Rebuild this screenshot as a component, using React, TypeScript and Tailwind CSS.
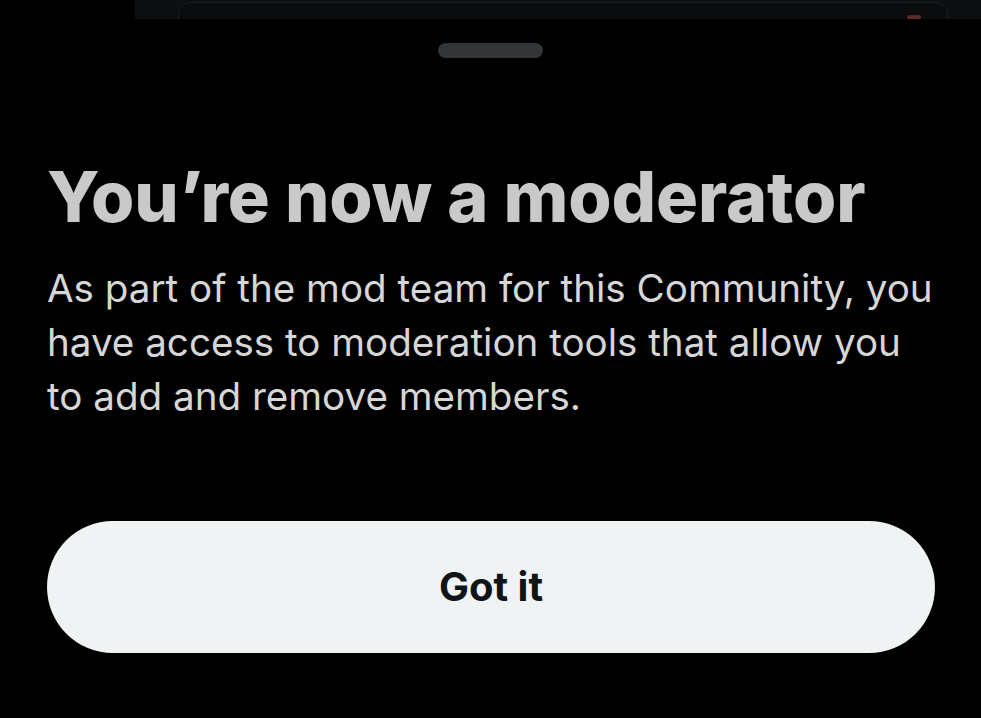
export default function App() {
  return (
    <div className="flex flex-col w-[981px] h-[718px] overflow-hidden bg-black" style={{ fontFamily: "Inter, 'Noto Sans', sans-serif" }}>
      {/* page behind the sheet */}
      <div className="relative shrink-0 ml-[135px] h-[40px] bg-[#0d0e10]">
        <div className="ml-[43px] mt-[2px] w-[770px] h-[30px] rounded-[12px] border border-[#1c1d20] bg-[#0b0c0e]" />
        <div className="absolute left-[772px] top-[15px] w-[14px] h-[6px] rounded-full bg-[#5a2a2a]" />
      </div>

      {/* bottom sheet */}
      <div className="relative -mt-[21px] -mx-[40px] flex-1 rounded-t-[44px] bg-black">
        <div className="flex justify-center pt-[24px]">
          <div className="w-[105px] h-[15px] rounded-full bg-[#333639]" />
        </div>
        <div className="px-[87px] pt-[97px]">
          <h1 className="text-[70px] leading-[84px] font-extrabold tracking-[-0.1px] text-[#c9c9c9]">
            You’re now a moderator
          </h1>
          <p className="mt-[22px] w-[897px] text-[38.6px] leading-[54px] text-[#d6d6d6]">
            As part of the mod team for this Community, you have access to moderation tools that allow you to add and remove members.
          </p>
          <button className="mt-[98px] w-[888px] h-[132px] rounded-full bg-[#eff3f4] text-[40px] font-bold text-[#0f1419]">
            Got it
          </button>
        </div>
      </div>
    </div>
  );
}
